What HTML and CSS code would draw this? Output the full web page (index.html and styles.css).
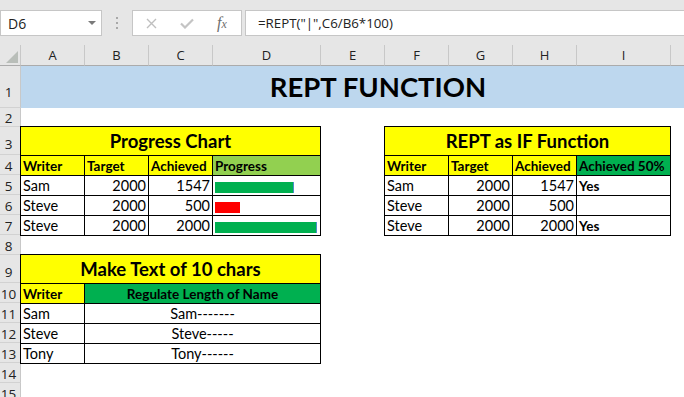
FILE: index.html
```html
<!DOCTYPE html>
<html lang="en">
<head>
    <meta charset="UTF-8">
    <title>REPT Function</title>
    <link rel="stylesheet" href="styles.css">
</head>
<body>
    <div class="toolbar">
        <div class="namebox"><span>D6</span><span class="caret"></span></div>
        <div class="grip"><i></i><i></i><i></i></div>
        <div class="fxbox">
            <svg width="11" height="11" viewBox="0 0 11 11"><path d="M1 1L10 10M10 1L1 10" stroke="#bfbfbf" stroke-width="1.4" fill="none"/></svg>
            <svg width="14" height="11" viewBox="0 0 14 11"><path d="M1 5.5L5 9.5L13 1.5" stroke="#c4c4c4" stroke-width="2.2" fill="none"/></svg>
            <span class="fx">f<span>x</span></span>
        </div>
        <div class="formula">=REPT("|",C6/B6*100)</div>
    </div>

    <div class="sheet">
        <!-- column headers -->
        <div class="corner"><span class="tri"></span></div>
        <div class="colhdr">A</div>
        <div class="colhdr">B</div>
        <div class="colhdr">C</div>
        <div class="colhdr">D</div>
        <div class="colhdr">E</div>
        <div class="colhdr">F</div>
        <div class="colhdr">G</div>
        <div class="colhdr">H</div>
        <div class="colhdr">I</div>
        <div class="colhdr"></div>

        <!-- row headers -->
        <div class="rowhdr big">1</div>
        <div class="rowhdr">2</div>
        <div class="rowhdr tall">3</div>
        <div class="rowhdr">4</div>
        <div class="rowhdr">5</div>
        <div class="rowhdr">6</div>
        <div class="rowhdr">7</div>
        <div class="rowhdr">8</div>
        <div class="rowhdr tall">9</div>
        <div class="rowhdr">10</div>
        <div class="rowhdr">11</div>
        <div class="rowhdr">12</div>
        <div class="rowhdr">13</div>
        <div class="rowhdr">14</div>
        <div class="rowhdr">15</div>

        <div class="banner">REPT FUNCTION</div>

        <div class="tbl progress">
            <div class="cell head">Progress Chart</div>
            <div class="cell th">Writer</div>
            <div class="cell th">Target</div>
            <div class="cell th">Achieved</div>
            <div class="cell th lime">Progress</div>

            <div class="cell">Sam</div>
            <div class="cell num">2000</div>
            <div class="cell num">1547</div>
            <div class="cell"><div class="bar" style="width:79px"></div></div>

            <div class="cell">Steve</div>
            <div class="cell num">2000</div>
            <div class="cell num">500</div>
            <div class="cell"><div class="bar low" style="width:25px"></div></div>

            <div class="cell">Steve</div>
            <div class="cell num">2000</div>
            <div class="cell num">2000</div>
            <div class="cell"><div class="bar" style="width:102px"></div></div>
        </div>

        <div class="tbl ifcheck">
            <div class="cell head">REPT as IF Function</div>
            <div class="cell th">Writer</div>
            <div class="cell th">Target</div>
            <div class="cell th">Achieved</div>
            <div class="cell th green">Achieved 50%</div>

            <div class="cell">Sam</div>
            <div class="cell num">2000</div>
            <div class="cell num">1547</div>
            <div class="cell bold">Yes</div>

            <div class="cell">Steve</div>
            <div class="cell num">2000</div>
            <div class="cell num">500</div>
            <div class="cell bold"></div>

            <div class="cell">Steve</div>
            <div class="cell num">2000</div>
            <div class="cell num">2000</div>
            <div class="cell bold">Yes</div>
        </div>

        <div class="tbl maketext">
            <div class="cell head">Make Text of 10 chars</div>
            <div class="cell th">Writer</div>
            <div class="cell th green mid small">Regulate Length of Name</div>

            <div class="cell">Sam</div>
            <div class="cell mid">Sam-------</div>

            <div class="cell">Steve</div>
            <div class="cell mid">Steve-----</div>

            <div class="cell">Tony</div>
            <div class="cell mid">Tony------</div>
        </div>
    </div>
</body>
</html>
```

FILE: styles.css
```css
body {
    margin: 0;
    width: 684px;
    height: 397px;
    overflow: hidden;
    background: #fff;
    font-family: Lato, sans-serif;
    color: #000;
}

/* formula bar */
.toolbar {
    display: flex;
    align-items: flex-start;
    height: 45px;
    padding-top: 10px;
    box-sizing: border-box;
    background: #e6e6e6;
    font-family: "Open Sans", sans-serif;
}
.namebox {
    width: 102px;
    height: 26px;
    box-sizing: border-box;
    border: 1px solid #c6c6c6;
    background: #fff;
    display: flex;
    align-items: center;
    padding: 0 5px 0 7px;
    font-size: 14px;
    color: #222;
}
.caret {
    margin-left: auto;
    border-left: 4px solid transparent;
    border-right: 4px solid transparent;
    border-top: 4px solid #7a7a7a;
}
.grip {
    width: 30px;
    height: 26px;
    display: flex;
    flex-direction: column;
    align-items: center;
    justify-content: center;
    gap: 3px;
}
.grip i {
    width: 2px;
    height: 2px;
    background: #a8a8a8;
}
.fxbox {
    width: 110px;
    height: 26px;
    box-sizing: border-box;
    border: 1px solid #c6c6c6;
    background: #fff;
    display: flex;
    align-items: center;
    padding-left: 13px;
    gap: 23px;
}
.fx {
    font-family: "Liberation Serif", serif;
    font-style: italic;
    font-size: 16px;
    color: #6e6e6e;
}
.fx span {
    font-size: 12px;
}
.formula {
    flex: 1;
    height: 26px;
    box-sizing: border-box;
    margin-left: 3px;
    margin-right: -2px;
    border: 1px solid #c6c6c6;
    background: #fff;
    display: flex;
    align-items: center;
    padding-left: 12px;
    font-size: 13.3px;
    color: #222;
}

/* worksheet */
.sheet {
    display: grid;
    grid-template-columns: 21px 64px 64px 64px 108px 64px 64px 64px 64px 94px 64px;
    grid-template-rows: 21px 42px 19px 28px 20px 20px 20px 20px 20px 28px 20px 20px 20px 20px 20px 20px;
    width: max-content;
}
.corner {
    background: #e6e6e6;
    border-bottom: 1px solid #ababab;
    border-right: 1px solid #c8c8c8;
    display: flex;
    justify-content: flex-end;
    align-items: flex-end;
    padding: 0 2px 2px 0;
}
.tri {
    width: 12px;
    height: 12px;
    background: #b9beb9;
    clip-path: polygon(100% 0, 100% 100%, 0 100%);
}
.colhdr {
    background: #e6e6e6;
    border-bottom: 1px solid #ababab;
    border-right: 1px solid #c8c8c8;
    display: flex;
    justify-content: center;
    align-items: center;
    font-family: "Open Sans", sans-serif;
    font-size: 13px;
    color: #222;
}
.rowhdr {
    grid-column: 1;
    background: #e6e6e6;
    border-bottom: 1px solid #d2d2d2;
    border-right: 1px solid #c8c8c8;
    display: flex;
    justify-content: center;
    align-items: flex-end;
    padding-right: 3px;
    font-family: "Open Sans", sans-serif;
    font-size: 13.5px;
    line-height: 1.2;
    color: #222;
}
.rowhdr.big {
    padding-bottom: 7px;
}
.rowhdr.tall {
    padding-bottom: 2px;
}

.banner {
    grid-row: 2;
    grid-column: 2 / 12;
    background: #bdd7ee;
    display: flex;
    justify-content: center;
    align-items: flex-end;
    padding-bottom: 5px;
    font-size: 27.5px;
    font-weight: 700;
    line-height: 1.2;
}

.tbl {
    display: grid;
    gap: 1px;
    background: #000;
    border: 1px solid #000;
    margin: -1px 0 -1px -1px;
    grid-template-rows: 28px repeat(4, 1fr);
}
.progress {
    grid-row: 4 / 9;
    grid-column: 2 / 6;
    grid-template-columns: 63px 63px 63px 1fr;
}
.ifcheck {
    grid-row: 4 / 9;
    grid-column: 7 / 11;
    grid-template-columns: 63px 63px 63px 1fr;
}
.maketext {
    grid-row: 10 / 15;
    grid-column: 2 / 6;
    grid-template-columns: 63px 1fr;
}

.cell {
    background: #fff;
    display: flex;
    align-items: flex-end;
    padding: 0 2px 1px;
    font-size: 14.5px;
    line-height: 1.2;
    white-space: nowrap;
    overflow: hidden;
}
.head {
    grid-column: 1 / -1;
    background: #ff0;
    justify-content: center;
    font-size: 18.5px;
    font-weight: 700;
    padding-bottom: 3px;
}
.th {
    background: #ff0;
    font-size: 13.5px;
    font-weight: 700;
}
.th.lime {
    background: #92d050;
}
.th.green {
    background: #00b050;
}
.bold {
    font-size: 13.5px;
    font-weight: 700;
}
.num {
    justify-content: flex-end;
}
.mid {
    justify-content: center;
}
.th.small {
    font-size: 13.5px;
    padding-bottom: 1px;
}
.bar {
    height: 11px;
    margin-bottom: 1px;
    background: #00b050;
    border-right: 1px solid #4a8fc9;
    box-sizing: border-box;
}
.bar.low {
    background: #f00;
    border-right: none;
}
```
